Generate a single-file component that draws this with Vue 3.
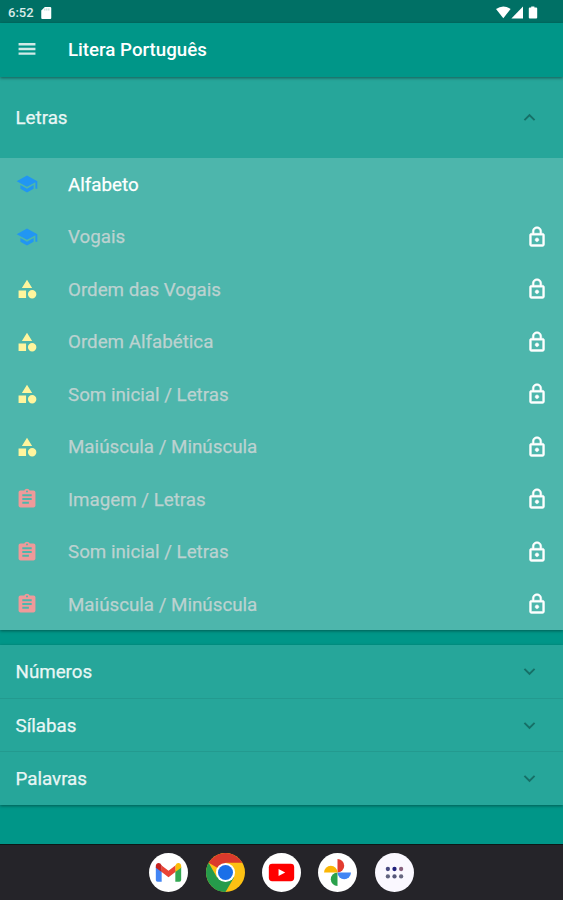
<script setup>
import { ref } from 'vue';

const lessons = [
  { icon: 'school', label: 'Alfabeto', locked: false },
  { icon: 'school', label: 'Vogais', locked: true },
  { icon: 'category', label: 'Ordem das Vogais', locked: true },
  { icon: 'category', label: 'Ordem Alfabética', locked: true },
  { icon: 'category', label: 'Som inicial / Letras', locked: true },
  { icon: 'category', label: 'Maiúscula / Minúscula', locked: true },
  { icon: 'assignment', label: 'Imagem / Letras', locked: true },
  { icon: 'assignment', label: 'Som inicial / Letras', locked: true },
  { icon: 'assignment', label: 'Maiúscula / Minúscula', locked: true },
];

const paths = {
  school: 'M5 13.18v4L12 21l7-3.82v-4L12 17l-7-3.82zM12 3L1 9l11 6 9-4.91V17h2V9L12 3z',
  category: 'M12 2l-5.5 9h11zM17.5 13a4.5 4.5 0 1 0 0 9a4.5 4.5 0 1 0 0-9zM3 13.5h8v8H3z',
  assignment:
    'M19 3h-4.18C14.4 1.84 13.3 1 12 1c-1.3 0-2.4.84-2.82 2H5c-1.1 0-2 .9-2 2v14c0 1.1.9 2 2 2h14c1.1 0 2-.9 2-2V5c0-1.1-.9-2-2-2zm-7 0c.55 0 1 .45 1 1s-.45 1-1 1-1-.45-1-1 .45-1 1-1zm2 14H7v-2h7v2zm3-4H7v-2h10v2zm0-4H7V7h10v2z',
  lock: 'M12 17c1.1 0 2-.9 2-2s-.9-2-2-2-2 .9-2 2 .9 2 2 2zm6-9h-1V6c0-2.76-2.24-5-5-5S7 3.24 7 6v2H6c-1.1 0-2 .9-2 2v10c0 1.1.9 2 2 2h12c1.1 0 2-.9 2-2V10c0-1.1-.9-2-2-2zM8.9 6c0-1.71 1.39-3.1 3.1-3.1s3.1 1.39 3.1 3.1v2H8.9V6zM18 20H6V10h12v10z',
};

const iconBox = '-0.8 -0.8 25.6 25.6';

const sections = ['Números', 'Sílabas', 'Palavras'];
const open = ref(true);
</script>

<template>
  <div class="screen">
    <div class="status">
      <span class="time">6:52</span>
      <svg class="sd" viewBox="0 0 10 12">
        <path d="M3.6 0H9a1 1 0 0 1 1 1v10a1 1 0 0 1-1 1H1a1 1 0 0 1-1-1V3.6z" fill="#fff" />
        <path d="M3.6 1.6v2M5.6 1.4v2.2M7.6 1.4v2.2" stroke="#8fc0bb" stroke-width="0.7" />
      </svg>
      <svg class="signals" viewBox="0 0 44 14">
        <path d="M0 3Q7.3-2 14.6 3L7.3 12.2z" fill="#fff" />
        <path d="M15.4 12.4L27 0.6V12.4z" fill="#fff" />
        <path d="M35.2 0.4h3.2v1.2h1.8q1 0 1 1v9q0 1-1 1h-6.400q-1 0-1-1v-9q0-1 1-1h1.400z" fill="#fff" />
      </svg>
    </div>

    <header class="app-bar">
      <svg class="icon menu" :viewBox="iconBox">
        <path d="M3 18.2h18v-2.500H3v2.500zm0-5h18v-2.500H3v2.500zm0-7.500v2.500h18V5.700H3z" />
      </svg>
      <h1>Litera Português</h1>
    </header>

    <main>
      <section class="panel">
        <div class="panel-header expanded" @click="open = !open">
          <span class="title">Letras</span>
          <svg class="icon chevron" :class="{ up: open }" viewBox="0 0 24 24">
            <path d="M16.59 8.59L12 13.17 7.41 8.59 6 10l6 6 6-6z" />
          </svg>
        </div>
        <ul v-if="open">
          <li v-for="(lesson, i) in lessons" :key="i" :class="{ locked: lesson.locked }">
            <svg class="icon" :class="lesson.icon" :viewBox="iconBox">
              <path :d="paths[lesson.icon]" />
            </svg>
            <span class="label">{{ lesson.label }}</span>
            <svg v-if="lesson.locked" class="icon lock" :viewBox="iconBox">
              <path :d="paths.lock" />
            </svg>
          </li>
        </ul>
      </section>

      <section class="panel">
        <div v-for="name in sections" :key="name" class="panel-header">
          <span class="title">{{ name }}</span>
          <svg class="icon chevron" viewBox="0 0 24 24">
            <path d="M16.59 8.59L12 13.17 7.41 8.59 6 10l6 6 6-6z" />
          </svg>
        </div>
      </section>
    </main>

    <nav class="taskbar">
      <!-- Gmail -->
      <svg viewBox="0 0 40 40">
        <circle cx="20" cy="20" r="20" fill="#fff" />
        <path d="M7 14v13.8q0 1.8 1.8 1.8H13V18z" fill="#4285f4" />
        <path d="M27 18v11.6h4.2q1.8 0 1.8-1.8V14z" fill="#34a853" />
        <path d="M27 12.8v6.8l6-4.4v-2c0-2.7-2.8-3.8-4.6-2.4z" fill="#fbbc04" />
        <path d="M13 19.6v-6.8l7 5.3 7-5.3v6.8l-7 5.3z" fill="#ea4335" />
        <path d="M7 13.2v2l6 4.4v-6.8l-1.4-2C9.8 9.4 7 10.5 7 13.2z" fill="#c5221f" />
      </svg>
      <!-- Chrome -->
      <svg viewBox="0 0 40 40">
        <circle cx="20" cy="20" r="20" fill="#fdc113" />
        <path d="M20 20L2.7 10A20 20 0 0 1 37.3 10H20z" fill="#db3a2c" />
        <path d="M2.7 10A20 20 0 0 0 20 40l8.7-15L20 20 11.3 25z" fill="#259b4b" />
        <circle cx="20" cy="20" r="9.8" fill="#fff" />
        <circle cx="20" cy="20" r="7.7" fill="#1a6fe8" />
      </svg>
      <!-- YouTube -->
      <svg viewBox="0 0 40 40">
        <circle cx="20" cy="20" r="20" fill="#fff" />
        <rect x="7" y="11" width="26" height="18" rx="3.5" fill="#f00" />
        <path d="M17 16.4v7.2l6.8-3.6z" fill="#fff" />
      </svg>
      <!-- Google Photos -->
      <svg viewBox="0 0 40 40">
        <circle cx="20" cy="20" r="20" fill="#fff" />
        <path d="M20 6.2a6.9 6.9 0 0 1 0 13.8z" fill="#e23c2f" />
        <path d="M33.8 20a6.9 6.9 0 0 1-13.8 0z" fill="#4285f4" />
        <path d="M20 33.8a6.9 6.9 0 0 1 0-13.8z" fill="#2ba24c" />
        <path d="M6.2 20a6.9 6.9 0 0 1 13.8 0z" fill="#fbb605" />
      </svg>
      <!-- All apps -->
      <svg viewBox="0 0 40 40">
        <circle cx="20" cy="20" r="20" fill="#faf8ff" />
        <circle cx="13.2" cy="16.4" r="2.2" fill="#474a80" />
        <circle cx="20" cy="16.4" r="2.2" fill="#20207c" />
        <circle cx="26.8" cy="16.4" r="2.2" fill="#87607d" />
        <circle cx="13.2" cy="24" r="2.2" fill="#61647f" />
        <circle cx="20" cy="24" r="2.2" fill="#555779" />
        <circle cx="26.8" cy="24" r="2.2" fill="#666780" />
      </svg>
    </nav>
  </div>
</template>

<style>
body {
  margin: 0;
}
</style>

<style scoped>
.screen {
  display: flex;
  flex-direction: column;
  height: 900px;
  overflow: hidden;
  background: #009688;
  color: #fff;
  font-family: Roboto, sans-serif;
  font-size: 18.75px;
}

.status {
  display: flex;
  align-items: center;
  height: 23px;
  padding: 2px 23px 0 8px;
  box-sizing: border-box;
  background: #007065;
}

.time {
  width: 26px;
  font-size: 13px;
  font-weight: 500;
  color: #d9ebe9;
}

.sd {
  width: 10.5px;
  height: 12px;
  margin-left: 7px;
}

.signals {
  width: 44px;
  height: 14px;
  margin-left: auto;
}

.app-bar {
  display: flex;
  align-items: center;
  position: relative;
  height: 54px;
  padding-left: 15px;
  box-shadow: 0 1px 3px rgba(0, 0, 0, 0.45);
  background: #009688;
}

h1 {
  margin: 0 0 0 29px;
  font-size: 18.7px;
  font-weight: 500;
}

.icon {
  flex: none;
  width: 24px;
  height: 24px;
  fill: currentColor;
}

.menu {
  margin-top: -2px;
  color: #d0eae7;
}

main {
  flex: 1;
  display: flex;
  flex-direction: column;
  gap: 14.5px;
}

.panel {
  box-shadow: 0 1px 3px rgba(0, 0, 0, 0.4);
}

.panel-header {
  display: flex;
  align-items: center;
  justify-content: space-between;
  height: 53.4px;
  padding: 0 22px 0 15.5px;
  box-sizing: border-box;
  background: #26a69a;
  color: #e9f6f5;
  cursor: pointer;
}

.panel-header + .panel-header {
  border-top: 1px solid #239a8f;
}

.panel-header.expanded {
  height: 80.5px;
}

.title,
.label {
  padding-top: 1px;
  -webkit-text-stroke: 0.25px currentColor;
}

.panel-header .chevron {
  width: 23px;
  height: 23px;
  color: #167067;
}

.chevron.up {
  transform: rotate(180deg);
}

ul {
  margin: 0;
  padding: 0;
  list-style: none;
  background: #4db6ac;
}

li {
  display: flex;
  align-items: center;
  height: 52.5px;
  padding: 1px 14px 0 15px;
  box-sizing: border-box;
}

.label {
  flex: 1;
  margin-left: 29px;
}

.locked .label {
  color: #bcd2d0;
}

.school {
  color: #2196f3;
}

.category {
  color: #fff59d;
}

.assignment {
  color: #ef9a9a;
}

.lock {
  stroke: currentColor;
  stroke-width: 0.5;
}

.taskbar {
  display: flex;
  align-items: center;
  justify-content: center;
  gap: 17.3px;
  height: 56px;
  border-top: 1px solid #0c1817;
  box-sizing: border-box;
  background: #252429;
}

.taskbar svg {
  width: 39px;
  height: 39px;
}
</style>
